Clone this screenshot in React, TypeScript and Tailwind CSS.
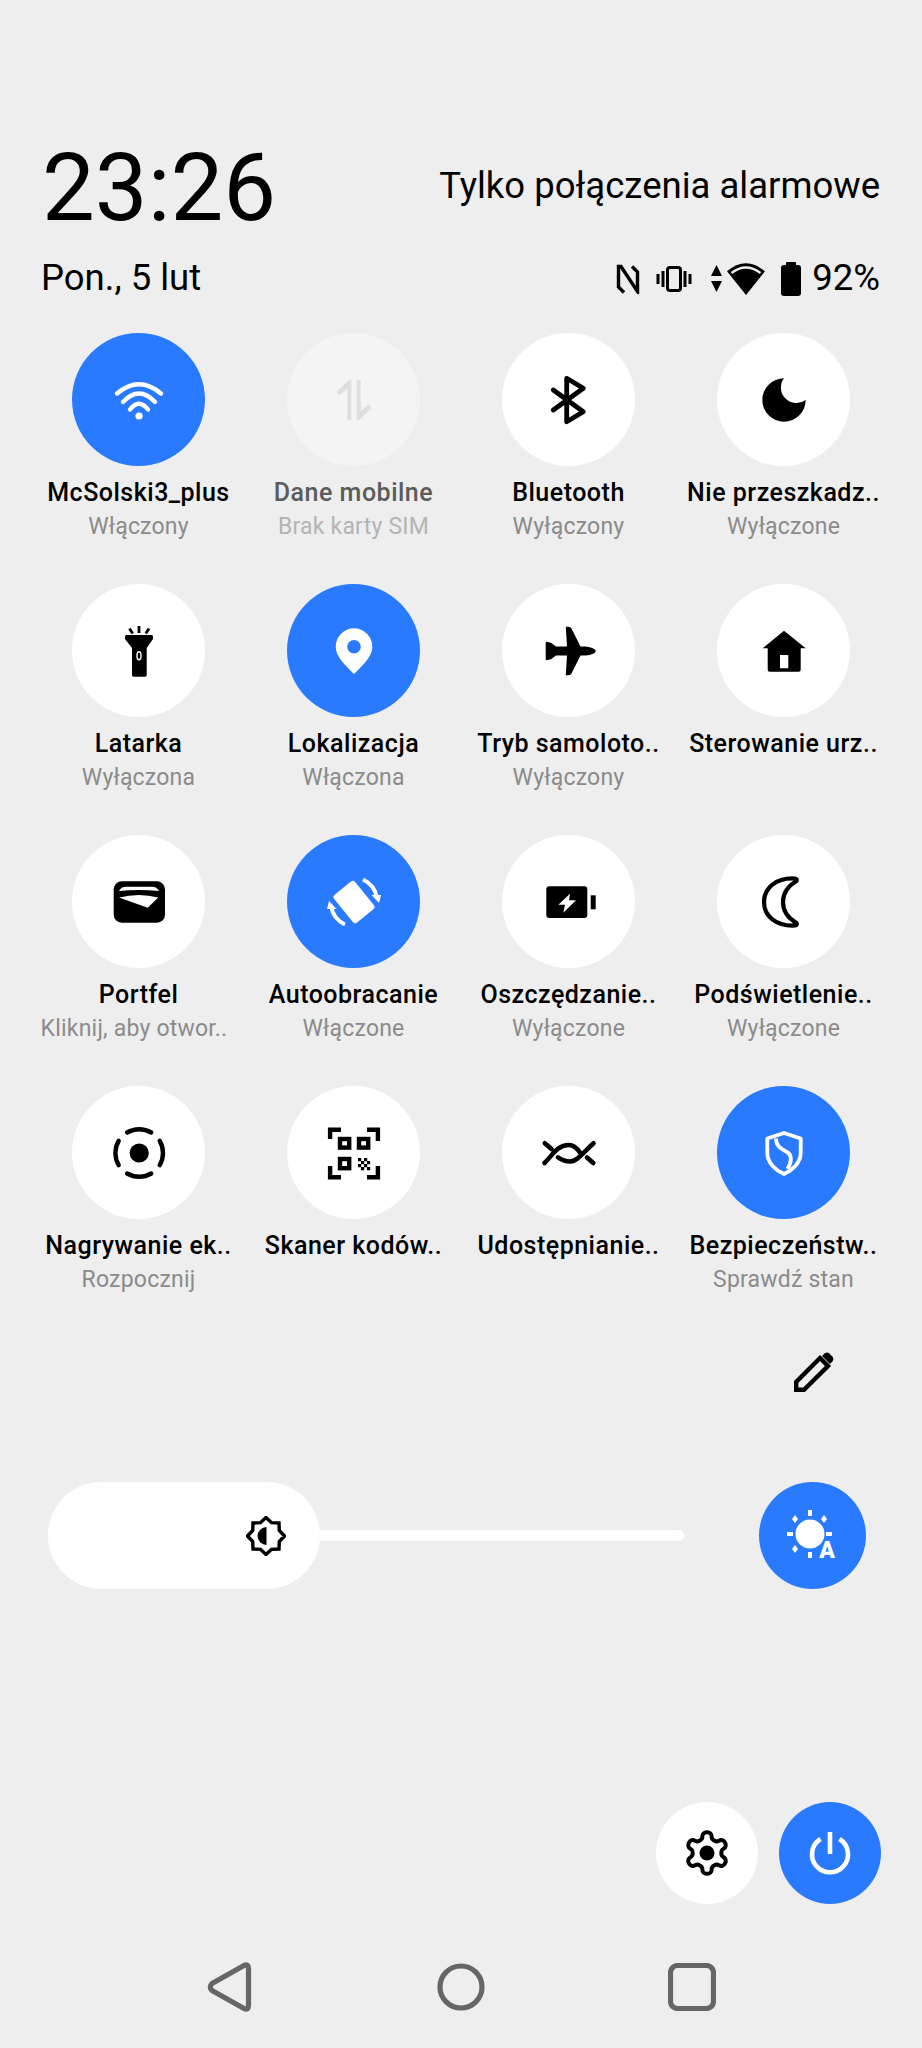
import type { ReactNode } from "react";

const BLUE = "#2a7aff";

// Every tile glyph sits on a 60x60 box centred in its circle
function Glyph({ children }: { children: ReactNode }) {
  return (
    <svg width="60" height="60" viewBox="0 0 60 60" fill="none">
      {children}
    </svg>
  );
}

const WifiIcon = () => (
  <Glyph>
    <g stroke="#fff" strokeWidth="4.4" strokeLinecap="round">
      <path d="M8 23.5Q30 5 52 23.5" />
      <path d="M14 32Q30 15 46 32" />
      <path d="M21 39.5Q30 28 39 39.5" />
    </g>
    <circle cx="30" cy="46" r="3.6" fill="#fff" />
  </Glyph>
);

const DataIcon = () => (
  <Glyph>
    <path
      d="M27.3 10V50H23.3V19L15 25.5L12.7 22L25 10Z M32.7 50V10H36.7V41L45 34.5L47.3 38L35 50Z"
      fill="#dedede"
    />
  </Glyph>
);

const BluetoothIcon = () => (
  <Glyph>
    <path
      d="M14.3 20L44.3 41.7L27.7 51.7V8.3L44.3 18.3L14.3 40"
      stroke="#000"
      strokeWidth="4.8"
      strokeLinejoin="round"
      strokeLinecap="round"
    />
  </Glyph>
);

const MoonIcon = () => (
  <Glyph>
    <path d="M30 8.3A21.7 21.7 0 1 0 51.7 30A15.5 15.5 0 0 1 30 8.3Z" fill="#000" />
  </Glyph>
);

const TorchIcon = () => (
  <Glyph>
    <path d="M17.5 14H42.5Q44 14 44 15.5V18L37.7 27V54Q37.7 55.7 36 55.7H24.7Q23 55.7 23 54V27L16 18V15.5Q16 14 17.5 14Z" fill="#000" />
    <ellipse cx="30" cy="34.7" rx="2" ry="4" stroke="#fff" strokeWidth="1.4" />
    <g stroke="#000" strokeWidth="2.8">
      <path d="M30 5V12" />
      <path d="M20.5 7.5L23.7 12.5" />
      <path d="M40 7.5L36.8 12.5" />
    </g>
  </Glyph>
);

const PinIcon = () => (
  <Glyph>
    <path
      d="M30 7.3A18.3 18.3 0 0 1 48.3 25.7C48.3 36 38 45 30 53C22 45 11.7 36 11.7 25.7A18.3 18.3 0 0 1 30 7.3Z"
      fill="#fff"
    />
    <circle cx="30" cy="25.7" r="6.8" fill={BLUE} />
  </Glyph>
);

const PlaneIcon = () => (
  <Glyph>
    <path
      d="M56.7 30C56.7 32.8 50 34.6 44 34.6H41.5L32.5 52.5Q31.5 54.3 29.5 54.3H26.8L28 34.6H17L12 38.2L7.5 39.2Q6.7 39.2 6.7 38V22Q6.7 20.8 7.5 20.8L12 21.8L17 25.4H28L26.8 5.7H29.5Q31.5 5.7 32.5 7.5L41.5 25.4H44C50 25.4 56.7 27.2 56.7 30Z"
      fill="#000"
    />
  </Glyph>
);

const HomeIcon = () => (
  <Glyph>
    <path
      d="M30 9.7L51.7 27.3H46.7V48.7Q46.7 50.7 44.7 50.7H15.7Q13.7 50.7 13.7 48.7V27.3H8.7ZM26 34V47.3H34.3V34Z"
      fill="#000"
      fillRule="evenodd"
    />
  </Glyph>
);

const WalletIcon = () => (
  <Glyph>
    <rect x="4.7" y="9.3" width="51.3" height="41.4" rx="8" fill="#000" />
    <path d="M10 19Q12 14.7 17 14.7H43Q48 14.7 50 19Q30 16.8 10 19Z" fill="#fff" />
    <path d="M10 25.5Q30 20.5 49.3 25.5L38.7 35.7Z" fill="#fff" />
  </Glyph>
);

const RotateIcon = () => (
  <Glyph>
    <rect x="16.5" y="12.2" width="27" height="35.6" rx="3" fill="#fff" transform="rotate(-39 30 30)" />
    <g stroke="#fff" strokeWidth="4">
      <path d="M39 7.5A25 25 0 0 1 53 26" />
      <path d="M21 52.5A25 25 0 0 1 7 34" />
    </g>
    <path d="M55 31L47.5 23L57 23Z M5 29L12.5 37L3 37Z" fill="#fff" />
  </Glyph>
);

const RecordIcon = () => (
  <Glyph>
    <circle
      cx="30.2"
      cy="30"
      r="23.8"
      stroke="#000"
      strokeWidth="4.4"
      pathLength={100}
      strokeDasharray="17 8"
      strokeDashoffset="8.5"
      strokeLinecap="round"
    />
    <circle cx="30.2" cy="30" r="9.6" fill="#000" />
  </Glyph>
);

const QrIcon = () => (
  <Glyph>
    <g stroke="#000" strokeWidth="4.4">
      <path d="M17 6.8H6.1V16" />
      <path d="M43 6.8H53.9V18" />
      <path d="M6.1 43V54.2H17" />
      <path d="M53.9 43V54.2H43" />
      <rect x="16" y="16" width="9.2" height="8.6" />
      <rect x="35" y="16" width="9.2" height="8.6" />
      <rect x="16" y="36" width="9.2" height="9.2" />
    </g>
    <path
      d="M34 35h3.2v3.2h-3.2zM40 35h3.2v3.2h-3.2zM37 38h3.2v3.2h-3.2zM43 38h3.2v3.2h-3.2zM34 41h3.2v3.2h-3.2zM40 41h3.2v3.2h-3.2zM37 44h3.2v3.2h-3.2zM43 44h3.2v3.2h-3.2z"
      fill="#000"
    />
  </Glyph>
);

const BatterySaverIcon = () => (
  <Glyph>
    <rect x="7.3" y="14.3" width="41" height="31.7" rx="3" fill="#000" />
    <rect x="51.7" y="23.3" width="5" height="14" fill="#000" />
    <path d="M31 21.7L19.3 32.7H26L24.3 40.7L37 28.3H30Z" fill="#fff" />
  </Glyph>
);

const CrescentIcon = () => (
  <Glyph>
    <path
      d="M41 6.5C22 5.5 10 16 10 30C10 44 22 54.5 41 53.5Q43.5 53 42.5 51C34 46 29 39 29 30C29 21 34 14 42.5 9Q43.5 7 41 6.5Z"
      stroke="#000"
      strokeWidth="4.2"
    />
  </Glyph>
);

const ShareIcon = () => (
  <Glyph>
    <g stroke="#000" strokeWidth="4.6" strokeLinecap="round">
      <path d="M5.5 40C13 33 18 22 30 22C35.5 22 38.5 26 41 29.5" />
      <path d="M48 34.5L54.3 40" />
      <path d="M5.8 20.3L12.5 26" />
      <path d="M19 34.3C23 37 27 38.5 31 38.5C38 38.5 44 30 54.5 20.3" />
    </g>
  </Glyph>
);

const ShieldIcon = () => (
  <Glyph>
    <path
      d="M30 10L46.7 15.5V30C46.7 40 38 47.5 30 51C22 47.5 13.3 40 13.3 30V15.5Z"
      stroke="#fff"
      strokeWidth="3.8"
      strokeLinejoin="round"
    />
    <path d="M22 15.5C22 24 28 26 33 29C38 32 38 39 33.5 46" stroke="#fff" strokeWidth="3.8" />
  </Glyph>
);

type Tile = {
  label: string;
  status?: string;
  icon: ReactNode;
  on?: boolean;
  disabled?: boolean;
};

const tiles: Tile[] = [
  { label: "McSolski3_plus", status: "Włączony", icon: <WifiIcon />, on: true },
  { label: "Dane mobilne", status: "Brak karty SIM", icon: <DataIcon />, disabled: true },
  { label: "Bluetooth", status: "Wyłączony", icon: <BluetoothIcon /> },
  { label: "Nie przeszkadz..", status: "Wyłączone", icon: <MoonIcon /> },
  { label: "Latarka", status: "Wyłączona", icon: <TorchIcon /> },
  { label: "Lokalizacja", status: "Włączona", icon: <PinIcon />, on: true },
  { label: "Tryb samoloto..", status: "Wyłączony", icon: <PlaneIcon /> },
  { label: "Sterowanie urz..", icon: <HomeIcon /> },
  { label: "Portfel", status: "Kliknij, aby otwor..", icon: <WalletIcon /> },
  { label: "Autoobracanie", status: "Włączone", icon: <RotateIcon />, on: true },
  { label: "Oszczędzanie..", status: "Wyłączone", icon: <BatterySaverIcon /> },
  { label: "Podświetlenie..", status: "Wyłączone", icon: <CrescentIcon /> },
  { label: "Nagrywanie ek..", status: "Rozpocznij", icon: <RecordIcon /> },
  { label: "Skaner kodów..", icon: <QrIcon /> },
  { label: "Udostępnianie..", icon: <ShareIcon /> },
  { label: "Bezpieczeństw..", status: "Sprawdź stan", icon: <ShieldIcon />, on: true },
];

function QuickTile({ tile }: { tile: Tile }) {
  const circle = tile.on ? "bg-[#2a7aff]" : tile.disabled ? "bg-[#f4f4f4]" : "bg-white";
  // Clipped status lines sit a little left of the tile's centre line
  const clipped = tile.status?.endsWith("..") ? "mr-[9px]" : "";
  return (
    <div className="flex flex-col items-center">
      <div className={`flex h-[133px] w-[133px] items-center justify-center rounded-full ${circle}`}>
        {tile.icon}
      </div>
      <div
        className={`mt-[10px] whitespace-nowrap text-[25px] font-medium leading-[34px] tracking-[0.5px] ${
          tile.disabled ? "text-[#5c5c5c]" : "text-black"
        }`}
      >
        {tile.label}
      </div>
      {tile.status && (
        <div
          className={`whitespace-nowrap text-[23px] leading-[34px] tracking-[0.2px] ${clipped} ${
            tile.disabled ? "text-[#b4b4b4]" : "text-[#8b8b8b]"
          }`}
        >
          {tile.status}
        </div>
      )}
    </div>
  );
}

function StatusIcons() {
  return (
    <div className="flex items-center">
      <svg width="24" height="30" viewBox="0 0 24 30" fill="none" stroke="#000" strokeWidth="3.4">
        <path d="M8 28.5L2.5 23V2.5H5L21.5 27.5V8L16 2.5" />
      </svg>
      <svg className="ml-[16px]" width="36" height="26" viewBox="0 0 36 26" fill="#000">
        <rect x="0.5" y="8" width="3" height="10" />
        <rect x="5.5" y="5" width="3" height="16" />
        <rect x="11.5" y="1.5" width="13" height="23" rx="2.5" fill="none" stroke="#000" strokeWidth="3" />
        <rect x="27.5" y="5" width="3" height="16" />
        <rect x="32.5" y="8" width="3" height="10" />
      </svg>
      <svg className="ml-[19px]" width="11" height="27" viewBox="0 0 11 27" fill="#000">
        <path d="M5.5 0L11 11H0Z" />
        <path d="M5.5 27L0 16H11Z" />
      </svg>
      <svg className="ml-[5px]" width="38" height="32" viewBox="0 0 38 32">
        <path d="M0 8.3Q19 -8 38 8.3L19 32Z" fill="#000" />
        <path d="M4.5 10Q19 -1 33.5 10" fill="none" stroke="#eeeeee" strokeWidth="2.2" />
      </svg>
      <svg className="ml-[16px]" width="20" height="34" viewBox="0 0 20 34" fill="#000">
        <rect x="5" y="0" width="10" height="5" rx="1" />
        <rect x="0" y="3" width="20" height="31" rx="3" />
      </svg>
      <span className="ml-[11px] text-[36.5px] leading-none">92%</span>
    </div>
  );
}

function BrightnessThumbIcon() {
  return (
    <svg width="40" height="40" viewBox="0 0 40 40" fill="none">
      <path
        d="M20 1.5L25.5 6.7L33 7L33.3 14.5L38.5 20L33.3 25.5L33 33L25.5 33.3L20 38.5L14.5 33.3L7 33L6.7 25.5L1.5 20L6.7 14.5L7 7L14.5 6.7Z"
        stroke="#000"
        strokeWidth="3.4"
      />
      <path d="M20.5 11A9 9 0 0 0 20.5 29Z" fill="#000" />
    </svg>
  );
}

function AutoBrightnessIcon() {
  return (
    <svg width="56" height="56" viewBox="0 0 56 56" fill="#fff">
      <circle cx="25" cy="26" r="14.5" />
      <rect x="23" y="2" width="4" height="6" />
      <rect x="23" y="44" width="4" height="6" />
      <rect x="2" y="24" width="6" height="4" />
      <rect x="41" y="24" width="6" height="4" />
      <path d="M10 7L13 11L10 15L7 11Z M39 7L42 11L39 15L36 11Z M10 37L13 41L10 45L7 41Z" />
      <text
        x="42"
        y="50"
        textAnchor="middle"
        fontSize="23"
        fontWeight="900"
        stroke={BLUE}
        strokeWidth="4"
        paintOrder="stroke"
        style={{ fontFamily: "Roboto, sans-serif" }}
      >
        A
      </text>
    </svg>
  );
}

export default function App() {
  return (
    <div className="flex h-[2048px] w-[922px] flex-col overflow-hidden bg-[#eeeeee] font-['Roboto',sans-serif] text-black">
      <div className="mt-[133px] flex h-[110px] items-center justify-between pl-[42px] pr-[42px]">
        <span className="text-[94px] leading-[110px]">23:26</span>
        <span className="mb-[3px] text-[36.5px] leading-none">Tylko połączenia alarmowe</span>
      </div>
      <div className="flex h-[71px] items-center justify-between pl-[41px] pr-[42px]">
        <span className="text-[36.5px] leading-none">Pon., 5 lut</span>
        <StatusIcons />
      </div>

      <div className="ml-[31px] mt-[19px] grid grid-cols-[repeat(4,215px)] auto-rows-[251px]">
        {tiles.map((t) => (
          <QuickTile key={t.label} tile={t} />
        ))}
      </div>

      <div className="mt-[15px] flex justify-end pr-[88px]">
        <svg width="40" height="40" viewBox="0 0 40 40" fill="none">
          <path d="M2.2 37.8V30L26 6L34 14L10 37.8Z" stroke="#000" strokeWidth="4.4" />
          <path d="M28 4L31 1.2Q33 0 35 1.2L38.8 5Q40 7 38.8 9L36 12Z" fill="#000" />
        </svg>
      </div>

      <div className="mt-[90px] flex items-center pl-[48px] pr-[56px]">
        <div className="flex h-[107px] w-[272px] items-center justify-end rounded-full bg-white pr-[34px]">
          <BrightnessThumbIcon />
        </div>
        <div className="h-[11px] w-[364px] rounded-r-full bg-white" />
        <div className="ml-auto flex h-[107px] w-[107px] items-center justify-center rounded-full bg-[#2a7aff]">
          <AutoBrightnessIcon />
        </div>
      </div>

      <div className="mt-[213px] flex justify-end gap-[21px] pr-[41px]">
        <div className="flex h-[102px] w-[102px] items-center justify-center rounded-full bg-white">
          <svg width="50" height="50" viewBox="0 0 24 24" fill="none" stroke="#000" strokeWidth="1.9">
            <path d="M12.22 2h-.44a2 2 0 0 0-2 2v.18a2 2 0 0 1-1 1.73l-.43.25a2 2 0 0 1-2 0l-.15-.08a2 2 0 0 0-2.73.73l-.22.38a2 2 0 0 0 .73 2.73l.15.1a2 2 0 0 1 1 1.72v.51a2 2 0 0 1-1 1.74l-.15.09a2 2 0 0 0-.73 2.73l.22.38a2 2 0 0 0 2.73.73l.15-.08a2 2 0 0 1 2 0l.43.25a2 2 0 0 1 1 1.73V20a2 2 0 0 0 2 2h.44a2 2 0 0 0 2-2v-.18a2 2 0 0 1 1-1.73l.43-.25a2 2 0 0 1 2 0l.15.08a2 2 0 0 0 2.73-.73l.22-.39a2 2 0 0 0-.73-2.73l-.15-.08a2 2 0 0 1-1-1.74v-.5a2 2 0 0 1 1-1.74l.15-.09a2 2 0 0 0 .73-2.73l-.22-.38a2 2 0 0 0-2.73-.73l-.15.08a2 2 0 0 1-2 0l-.43-.25a2 2 0 0 1-1-1.73V4a2 2 0 0 0-2-2z" />
            <circle cx="12" cy="12" r="3.6" fill="#000" stroke="none" />
          </svg>
        </div>
        <div className="flex h-[102px] w-[102px] items-center justify-center rounded-full bg-[#2a7aff]">
          <svg width="50" height="50" viewBox="0 0 50 50" fill="none" stroke="#fff" strokeWidth="4.6">
            <path d="M25 4V26" />
            <path d="M15.5 11A18 18 0 1 0 34.5 11" />
          </svg>
        </div>
      </div>

      <div className="mt-[58px] flex h-[50px] items-center pl-[207px]">
        <svg width="46" height="50" viewBox="0 0 46 50" fill="none" stroke="#666666" strokeWidth="5.2" strokeLinejoin="round">
          <path d="M37 3.5Q41.5 1.5 41.5 6.5V43.5Q41.5 48.5 37 46.5L5 28.5Q1.5 25 5 21.5Z" />
        </svg>
        <svg className="ml-[184px]" width="48" height="48" viewBox="0 0 48 48" fill="none" stroke="#666666" strokeWidth="5.2">
          <circle cx="24" cy="24" r="21" />
        </svg>
        <svg className="ml-[183px]" width="48" height="48" viewBox="0 0 48 48" fill="none" stroke="#666666" strokeWidth="5.2">
          <rect x="2.5" y="2.5" width="43" height="43" rx="7" />
        </svg>
      </div>
    </div>
  );
}
